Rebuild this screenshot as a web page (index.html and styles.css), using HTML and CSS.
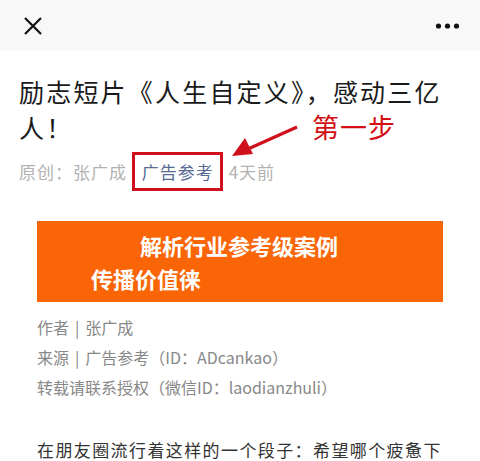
FILE: index.html
```html
<!DOCTYPE html>
<html lang="zh-CN">
<head>
    <meta charset="UTF-8">
    <meta name="viewport" content="width=device-width, initial-scale=1.0">
    <title>励志短片《人生自定义》，感动三亿人！</title>
    <link rel="stylesheet" href="styles.css">
</head>
<body>

<div class="topbar">
    <svg class="close-icon" width="20" height="20" viewBox="0 0 20 20">
        <path d="M2 2 L18 18 M18 2 L2 18" stroke="#111" stroke-width="2.2" fill="none"/>
    </svg>
    <svg class="more-icon" width="26" height="8" viewBox="0 0 26 8">
        <circle cx="3.5" cy="4" r="2.6" fill="#111"/>
        <circle cx="12.5" cy="4" r="2.6" fill="#111"/>
        <circle cx="21.5" cy="4" r="2.6" fill="#111"/>
    </svg>
</div>

<div class="post-header">
    <h1 class="title">励志短片《人生自定义》，感动三亿人！</h1>
    <div class="meta">
        <span class="meta-item">原创：</span><span class="meta-item author">张广成</span>
        <span class="meta-item account">广告参考</span>
        <span class="meta-item">4天前</span>
    </div>

    <!-- 标注 -->
    <div class="step-label">第一步</div>
    <svg class="step-arrow" width="76" height="40" viewBox="0 0 76 40">
        <path d="M71 6 L22 28" stroke="#d0101a" stroke-width="3.2" fill="none"/>
        <polygon points="6,35 19,17 27,33" fill="#d0101a"/>
    </svg>
</div>

<div class="content">
    <div class="banner">
        <div class="banner-line first">解析行业参考级案例</div>
        <div class="banner-line second">传播价值徕</div>
    </div>

    <div class="info">
        <p>作者<span class="sep">|</span>张广成</p>
        <p>来源<span class="sep">|</span>广告参考（ID：ADcankao）</p>
        <p>转载请联系授权（微信ID：laodianzhuli）</p>
    </div>

    <p class="body-text">在朋友圈流行着这样的一个段子：希望哪个疲惫下班的晚上，你能推开门看到一桌热饭菜。</p>
</div>

</body>
</html>
```

FILE: styles.css
```css
body {
    font-family: "Noto Sans CJK SC", "Noto Sans", sans-serif;
    background-color: #fff;
    color: #222;
    margin: 0;
    padding: 0;
    overflow: hidden;
}
.topbar {
    height: 51px;
    background-color: #f8f8f8;
    display: flex;
    align-items: center;
    justify-content: space-between;
    padding: 0 19px 0 23px;
}
.close-icon {
    margin-top: 1px;
}
.more-icon {
    margin-top: 1px;
}
.post-header {
    position: relative;
    padding: 22px 19px 0;
}
.title {
    margin: 0;
    font-size: 25px;
    font-weight: 400;
    line-height: 36px;
    letter-spacing: 2.2px;
    color: #1a1a1a;
}
.meta {
    margin-top: 15px;
    font-size: 17px;
    line-height: 24px;
    letter-spacing: 1px;
    color: #b2b2b2;
}
.meta-item {
    margin-right: 10px;
}
.meta-item:first-child {
    margin-right: 0;
}
.account {
    position: relative;
    color: #576b95;
}
.account::after {
    content: "";
    position: absolute;
    left: -10px;
    right: -9px;
    top: -7px;
    bottom: -7px;
    border: 3px solid #d0101a;
}
.step-label {
    position: absolute;
    left: 312px;
    top: 61px;
    font-size: 27px;
    line-height: 30px;
    letter-spacing: 1px;
    color: #d40f14;
}
.step-arrow {
    position: absolute;
    left: 226px;
    top: 70px;
}
.content {
    padding: 37px 37px 0;
}
.banner {
    height: 81px;
    box-sizing: border-box;
    padding-top: 8px;
    background-color: #fa6508;
    color: #fff;
    font-size: 22px;
    font-weight: 700;
    line-height: 33px;
}
.banner-line.first {
    margin-left: 103px;
}
.banner-line.second {
    margin-left: 54px;
}
.info {
    margin-top: 10px;
    font-size: 16px;
    line-height: 30px;
    color: #888;
}
.info p {
    margin: 0;
}
.sep {
    margin: 0 6px;
}
.body-text {
    margin: 33px 0 0;
    font-size: 17px;
    line-height: 30px;
    letter-spacing: 1.4px;
    color: #333;
}
```
